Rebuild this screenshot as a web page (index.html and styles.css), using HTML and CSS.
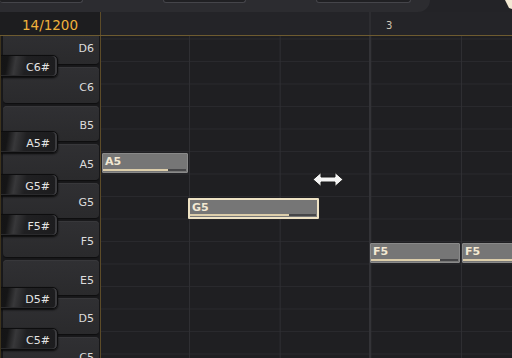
FILE: index.html
```html
<!DOCTYPE html>
<html lang="en">
<head>
  <meta charset="UTF-8" />
  <title>Piano Roll</title>
  <link rel="stylesheet" href="styles.css">
</head>
<body>
  <div class="app">
    <div class="toolbar-row">
      <div class="toolbar">
        <span class="tb-btn tb-a"></span>
        <span class="tb-btn tb-b"></span>
        <span class="tb-btn tb-c"></span>
      </div>
    </div>
    <svg class="playhead" width="8" height="9" viewBox="0 0 8 9">
      <polygon points="1,0 8,0 8,9 5,8" fill="#f3e9d4"/>
    </svg>

    <div class="header">
      <div class="counter">14/1200</div>
      <div class="ruler">
        <span class="ruler-line"></span>
        <span class="bar-num">3</span>
      </div>
    </div>

    <div class="roll">
      <div class="keys">
        <div class="whites">
          <div class="white">D6</div>
          <div class="white">C6</div>
          <div class="white">B5</div>
          <div class="white">A5</div>
          <div class="white">G5</div>
          <div class="white">F5</div>
          <div class="white">E5</div>
          <div class="white">D5</div>
          <div class="white">C5</div>
        </div>
        <div class="black" style="top:19px">C6#</div>
        <div class="black" style="top:95px">A5#</div>
        <div class="black" style="top:138px">G5#</div>
        <div class="black" style="top:178px">F5#</div>
        <div class="black" style="top:251px">D5#</div>
        <div class="black" style="top:292px">C5#</div>
      </div>

      <div class="grid">
        <span class="bar-line"></span>
        <div class="note" style="left:1px;top:117px;width:86px">
          <span class="note-name">A5</span>
          <span class="progress" style="width:77%"></span>
        </div>
        <div class="note selected" style="left:87px;top:162px;width:131px">
          <span class="note-name">G5</span>
          <span class="progress" style="width:78%"></span>
        </div>
        <div class="note" style="left:269px;top:207px;width:90px">
          <span class="note-name">F5</span>
          <span class="progress" style="width:78%"></span>
        </div>
        <div class="note" style="left:361px;top:207px;width:90px">
          <span class="note-name">F5</span>
          <span class="progress" style="width:78%"></span>
        </div>
        <svg class="cursor" width="32" height="17" viewBox="0 0 32 17">
          <polygon points="1,8.5 9,1.5 9,6 23,6 23,1.5 31,8.5 23,15.5 23,11 9,11 9,15.5" fill="#f4f4f4" stroke="#1a1a1a" stroke-width="1"/>
        </svg>
      </div>
    </div>
  </div>
</body>
</html>
```

FILE: styles.css
```css
* {
  margin: 0;
  padding: 0;
  box-sizing: border-box;
}

body {
  background: #232327;
  font-family: 'DejaVu Sans', Verdana, sans-serif;
  overflow: hidden;
}

.app {
  position: relative;
  width: 512px;
  height: 358px;
  overflow: hidden;
  background: #232327;
}

/* top toolbar (cut off) */
.toolbar-row {
  display: flex;
  height: 12px;
}

.toolbar {
  width: 430px;
  height: 12px;
  background: #2c2c30;
  border-bottom-right-radius: 14px;
  display: flex;
  align-items: flex-start;
}

.tb-btn {
  display: block;
  height: 3px;
  background: #202023;
  border: 1px solid #45454a;
  border-top: none;
  border-radius: 0 0 3px 3px;
}

.tb-a { width: 83px; border-left: none; }
.tb-b { width: 83px; margin-left: 80px; }
.tb-c { width: 95px; margin-left: 70px; }

.playhead {
  position: absolute;
  top: 0;
  right: 0;
}

/* header */
.header {
  display: flex;
  height: 24px;
  border-bottom: 1px solid #6e5b30;
}

.counter {
  width: 101px;
  background: #1d1d1f;
  border-right: 1px solid #5c4b28;
  color: #f0b23c;
  font-size: 13.5px;
  line-height: 23px;
  padding-top: 2px;
  text-align: center;
}

.ruler {
  flex: 1;
  position: relative;
  background: #242428;
}

.ruler-line {
  position: absolute;
  left: 268px;
  top: 0;
  bottom: 0;
  width: 2px;
  background: #2d2d31;
}

.bar-num {
  position: absolute;
  left: 285px;
  top: 8px;
  font-size: 10px;
  color: #cfc6b4;
}

/* piano roll */
.roll {
  display: flex;
  height: 322px;
  overflow: hidden;
}

.keys {
  position: relative;
  width: 101px;
  background: #19191b;
  border-left: 1px solid #3d331d;
  border-right: 1px solid #5c4b28;
  overflow: hidden;
}

.whites {
  margin-top: -7.6px;
  padding-left: 2px;
  padding-right: 1px;
}

.white {
  height: 35.57px;
  margin-bottom: 3px;
  border-radius: 4px;
  background: linear-gradient(to bottom, #303033, #2a2a2c);
  box-shadow: inset 0 1px 0 #38383b, 0 1px 1px #0e0e0f;
  display: flex;
  align-items: center;
  justify-content: flex-end;
  padding: 5px 5px 0 0;
  color: #dcdcdc;
  font-size: 11px;
}

.black {
  position: absolute;
  left: -1px;
  width: 58px;
  height: 22px;
  border: 1px solid #0d0d0e;
  border-radius: 0 5px 5px 0;
  background: linear-gradient(100deg, #141415 0, #151516 12%, #38383a 26%, #202022 44%, #1c1c1e 100%);
  box-shadow: inset -2px 0 0 #3c3c3f, inset 0 -1px 0 #2a2a2c, 0 1px 2px #0a0a0a;
  display: flex;
  align-items: center;
  justify-content: flex-end;
  padding: 2px 7px 0 0;
  color: #e4e4e4;
  font-size: 11px;
}

.grid {
  position: relative;
  flex: 1;
  background-color: #1f1f22;
  background-image:
    linear-gradient(to right, #2f2f33 1px, transparent 1px),
    linear-gradient(to bottom, #29292d 1px, transparent 1px);
  background-size: 90.67px 100%, 100% 22.5px;
  background-position: 88px 0, 0 2.5px;
}

.bar-line {
  position: absolute;
  left: 268px;
  top: 0;
  bottom: 0;
  width: 2px;
  background: #333337;
}

.note {
  position: absolute;
  height: 20px;
  background: #767676;
  border: 1px solid #8a8a8a;
  border-radius: 1px;
}

.note.selected {
  height: 21px;
  border: 2px solid #eee2c4;
}

.note-name {
  position: absolute;
  left: 2px;
  top: 1px;
  font-size: 11px;
  font-weight: bold;
  color: #f3e9d3;
}

.note::after {
  content: '';
  position: absolute;
  left: 0;
  right: 1px;
  bottom: 1px;
  height: 2px;
  background: #464648;
}

.progress {
  position: absolute;
  left: 0;
  bottom: 1px;
  height: 2px;
  background: #dccdaa;
  z-index: 1;
}

.cursor {
  position: absolute;
  left: 211px;
  top: 135px;
}
```
